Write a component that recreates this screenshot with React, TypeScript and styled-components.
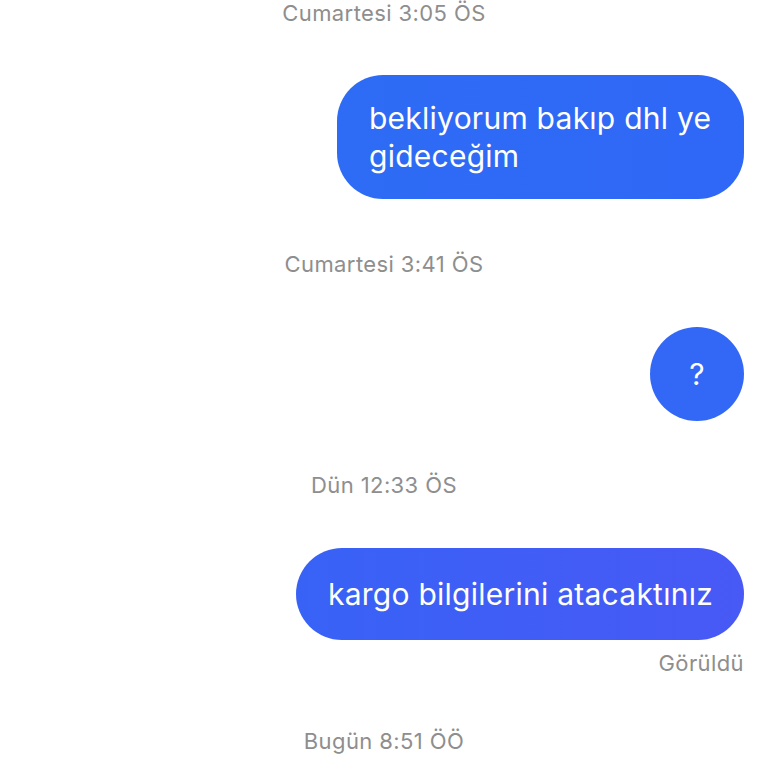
import React from 'react';
import styled, { createGlobalStyle } from 'styled-components';

const GlobalStyle = createGlobalStyle`
  html, body {
    margin: 0;
    padding: 0;
    background: #ffffff;
  }

  body {
    font-family: Inter, "Noto Sans", "DejaVu Sans", sans-serif;
    -webkit-font-smoothing: antialiased;
  }
`;

const Thread = styled.div`
  display: flex;
  flex-direction: column;
  padding: 0 24px;
  width: 768px;
  height: 768px;
  box-sizing: border-box;
  overflow: hidden;
`;

const Timestamp = styled.div<{ $top: number }>`
  margin-top: ${(p) => p.$top}px;
  text-align: center;
  font-size: 22px;
  letter-spacing: 0.4px;
  line-height: 26px;
  color: #8e8e8e;
`;

const Row = styled.div<{ $top: number }>`
  display: flex;
  justify-content: flex-end;
  margin-top: ${(p) => p.$top}px;
`;

const Bubble = styled.div<{ $maxWidth?: number; $from: string; $to: string }>`
  max-width: ${(p) => (p.$maxWidth ? `${p.$maxWidth}px` : '480px')};
  min-height: 92px;
  box-sizing: border-box;
  display: flex;
  align-items: center;
  padding: 24px 31px 24px 32px;
  border-radius: 46px;
  background: linear-gradient(90deg, ${(p) => p.$from}, ${(p) => p.$to});
  color: #ffffff;
  font-size: 30px;
  line-height: 38px;
  letter-spacing: 0.25px;
`;

const RoundBubble = styled.div`
  width: 94px;
  height: 94px;
  border-radius: 50%;
  background: #3367f6;
  color: #ffffff;
  display: flex;
  align-items: center;
  justify-content: center;
  font-size: 30px;
`;

const Seen = styled.div`
  margin-top: 10px;
  text-align: right;
  font-size: 22px;
  letter-spacing: 0.4px;
  line-height: 26px;
  color: #8e8e8e;
`;

export default function App() {
  return (
    <>
      <GlobalStyle />
      <Thread>
        <Timestamp $top={0}>Cumartesi 3:05 ÖS</Timestamp>

        <Row $top={49}>
          <Bubble $maxWidth={407} $from="#2e6cf5" $to="#2f67f6">
            bekliyorum bakıp dhl ye gideceğim
          </Bubble>
        </Row>

        <Timestamp $top={52}>Cumartesi 3:41 ÖS</Timestamp>

        <Row $top={50}>
          <RoundBubble>?</RoundBubble>
        </Row>

        <Timestamp $top={51}>Dün 12:33 ÖS</Timestamp>

        <Row $top={50}>
          <Bubble $from="#3862f6" $to="#4859f5">
            kargo bilgilerini atacaktınız
          </Bubble>
        </Row>
        <Seen>Görüldü</Seen>

        <Timestamp $top={52}>Bugün 8:51 ÖÖ</Timestamp>
      </Thread>
    </>
  );
}
